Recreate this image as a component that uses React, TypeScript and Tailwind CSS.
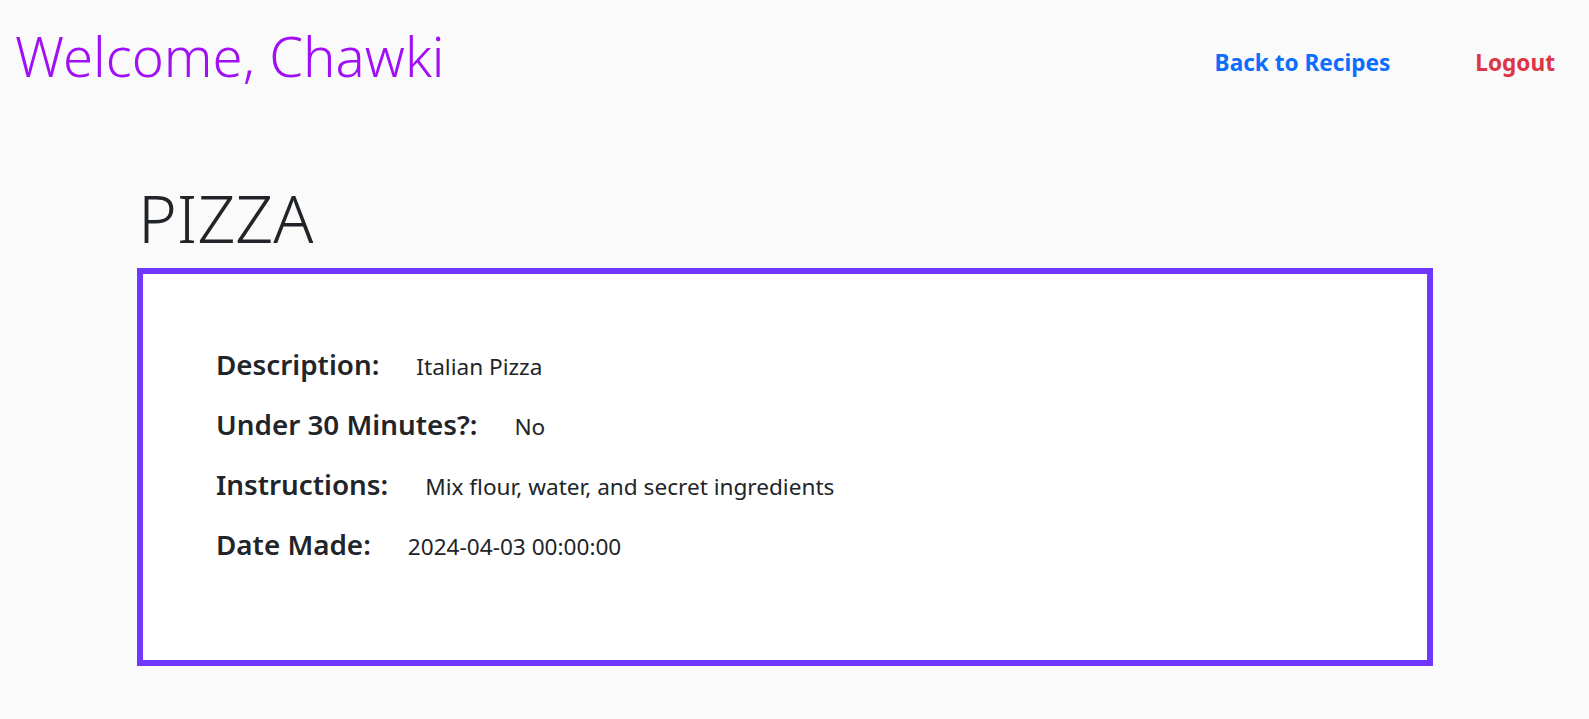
import React from "react";

export default function App() {
  const rows: [string, string][] = [
    ["Description:", "Italian Pizza"],
    ["Under 30 Minutes?:", "No"],
    ["Instructions:", "Mix flour, water, and secret ingredients"],
    ["Date Made:", "2024-04-03 00:00:00"],
  ];
  return (
    <div
      className="min-h-[719px] bg-[#fafafa] text-[#212529]"
      style={{ fontFamily: '"Noto Sans", "Open Sans", sans-serif' }}
    >
      <header className="flex items-center justify-between pl-[15px] pr-[34px] pt-[14px]">
        <h1 className="text-[54.5px] font-light leading-[84px] text-[#a10ff5]">
          Welcome, Chawki
        </h1>
        <nav className="mt-[14px] flex items-center gap-[85px] text-[22.6px] font-bold">
          <a className="text-[#0d6efd]">Back to Recipes</a>
          <a className="text-[#dc3545]">Logout</a>
        </nav>
      </header>
      <main className="ml-[137px] w-[1296px] pt-[77px]">
        <h2 className="pl-[1px] text-[66px] font-light leading-[84px] text-[#212529]">
          PIZZA
        </h2>
        <section className="mt-[9px] h-[398px] border-[6px] border-[#7038ff] bg-white pl-[73px] pt-[60px]">
          <div className="flex flex-col">
            {rows.map(([k, v]) => (
              <div key={k} className="flex h-[60px] items-baseline gap-[37px]">
                <span className="text-[27.8px] font-semibold leading-[60px]">{k}</span>
                <span className="text-[22.6px] leading-[60px]">{v}</span>
              </div>
            ))}
          </div>
        </section>
      </main>
    </div>
  );
}
